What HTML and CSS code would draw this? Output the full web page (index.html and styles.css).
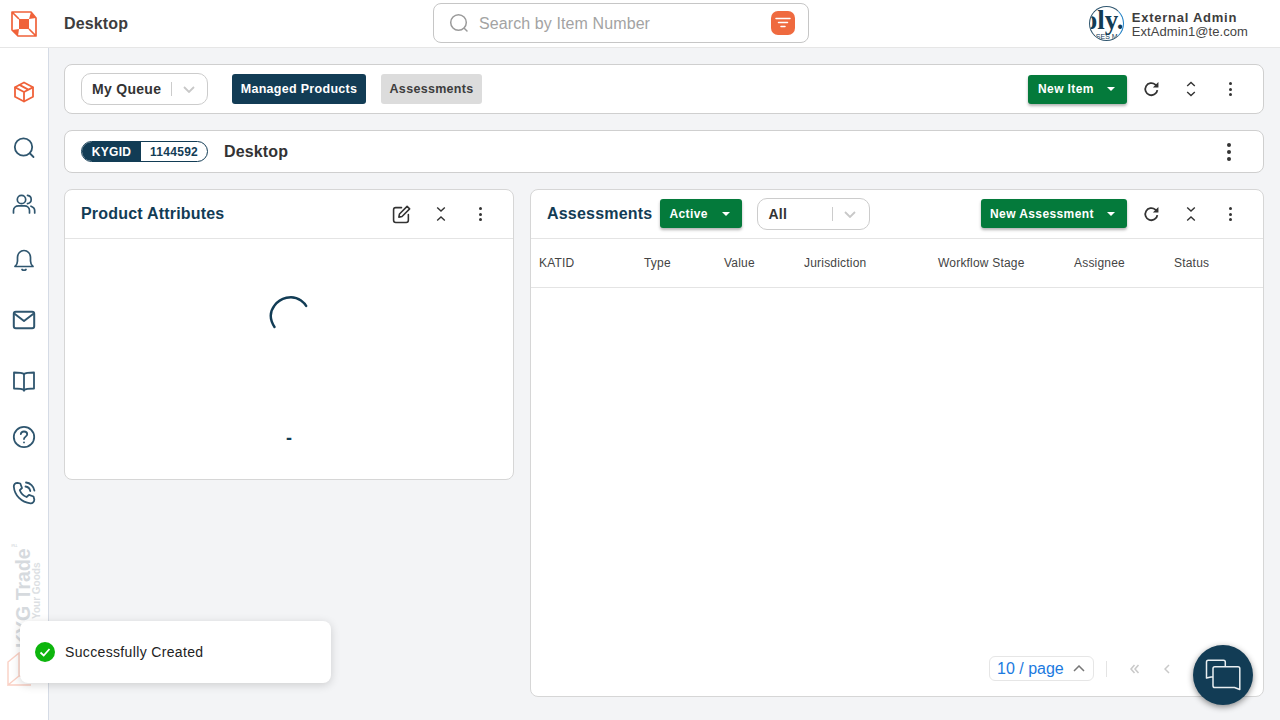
FILE: index.html
```html
<!DOCTYPE html>
<html lang="en">
<head>
    <meta charset="UTF-8">
    <meta name="viewport" content="width=device-width, initial-scale=1.0">
    <title>Desktop</title>
    <link rel="stylesheet" href="styles.css">
</head>
<body>
    <!-- Top bar -->
    <header class="topbar">
        <div class="logo-cell">
            <svg width="26" height="26" viewBox="0 0 26 26" fill="none">
                <path d="M8 8H18V18H8Z M20 1L25 7L18 8Z M1 19L7 25L8 18Z" fill="#f0623a"/>
                <path d="M1 1H20L25 7V25H7L1 19Z M1 1L8 8 M18 18L25 25" stroke="#f0623a" stroke-width="1.700" stroke-linejoin="round"/>
            </svg>
        </div>
        <div class="page-title">Desktop</div>
        <div class="search">
            <svg class="search-icon" width="20" height="20" viewBox="0 0 20 20" fill="none" stroke="#9a9a9a" stroke-width="1.500" stroke-linecap="round">
                <circle cx="9.500" cy="9.500" r="7.800"/><path d="M15.200 15.200L18 18"/>
            </svg>
            <span class="search-text">Search by Item Number</span>
            <span class="filter-btn">
                <svg width="16" height="12" viewBox="0 0 16 12" fill="none" stroke="#fff" stroke-width="1.500" stroke-linecap="round">
                    <path d="M1 1.500H15M3.500 5.500H12.500M6 9.500H10"/>
                </svg>
            </span>
        </div>
        <div class="profile">
            <div class="avatar">
                <span class="avatar-big">oly.</span>
                <span class="avatar-small">SES M</span>
            </div>
            <div class="profile-text">
                <div class="profile-name">External Admin</div>
                <div class="profile-mail">ExtAdmin1@te.com</div>
            </div>
        </div>
    </header>

    <div class="shell">
        <!-- Left icon rail -->
        <nav class="rail">
            <a class="rail-item">
                <svg width="24" height="24" viewBox="0 0 24 24" fill="none" stroke="#f0623a" stroke-width="1.800" stroke-linejoin="round" stroke-linecap="round">
                    <path d="M12 2.500L21 7.200V16.800L12 21.500L3 16.800V7.200Z"/><path d="M3.200 7.400L12 12L20.800 7.400M12 12V21.300M7.500 4.900L16.300 9.600"/>
                </svg>
            </a>
            <a class="rail-item">
                <svg width="24" height="24" viewBox="0 0 24 24" fill="none" stroke="#2f566f" stroke-width="1.800" stroke-linecap="round">
                    <circle cx="11.500" cy="11" r="8.700"/><path d="M18 17.500L21.500 21"/>
                </svg>
            </a>
            <a class="rail-item">
                <svg width="24" height="24" viewBox="0 0 24 24" fill="none" stroke="#2f566f" stroke-width="1.700" stroke-linecap="round">
                    <circle cx="9.500" cy="7.500" r="4.200"/><path d="M1.500 21V18.500C1.500 15.500 4 13.800 6.500 13.800H12.500C15 13.800 17.500 15.500 17.500 18.500V21"/><path d="M15.500 3.400C18 3.800 19.200 5.500 19.200 7.500C19.200 9.500 18 11.200 15.500 11.600M19 14.200C21.200 15 22.700 16.500 22.700 18.700V21"/>
                </svg>
            </a>
            <a class="rail-item">
                <svg width="24" height="24" viewBox="0 0 24 24" fill="none" stroke="#2f566f" stroke-width="1.700" stroke-linecap="round" stroke-linejoin="round">
                    <path d="M3 18.500H21C19.300 17 18.500 15.600 18.500 13V9.500C18.500 5.600 15.600 2.500 12 2.500C8.400 2.500 5.500 5.600 5.500 9.500V13C5.500 15.600 4.700 17 3 18.500Z"/><path d="M10 21.500C11 22.400 13 22.400 14 21.500"/>
                </svg>
            </a>
            <a class="rail-item rail-mail">
                <svg width="24" height="24" viewBox="0 0 24 24" fill="none" stroke="#2f566f" stroke-width="2" stroke-linejoin="round">
                    <rect x="1.800" y="3.800" width="20.400" height="16.400" rx="2"/><path d="M2.200 5.500L12 13L21.800 5.500"/>
                </svg>
            </a>
            <a class="rail-item rail-book">
                <svg width="24" height="24" viewBox="0 0 24 24" fill="none" stroke="#2f566f" stroke-width="1.800" stroke-linejoin="round">
                    <path d="M12 5C10.500 3.800 8 3.500 2 3.500V19.500C8 19.500 10.500 19.800 12 21C13.500 19.800 16 19.500 22 19.500V3.500C16 3.500 13.500 3.800 12 5Z"/><path d="M12 5V22.500"/>
                </svg>
            </a>
            <a class="rail-item">
                <svg width="24" height="24" viewBox="0 0 24 24" fill="none" stroke="#2f566f" stroke-width="1.800" stroke-linecap="round">
                    <circle cx="12" cy="12" r="10.200"/><path d="M8.800 9.200C9 7.400 10.400 6.500 12 6.500C13.800 6.500 15.200 7.700 15.200 9.300C15.200 11.500 12 11.700 12 14"/><path d="M12 17.300V17.400"/>
                </svg>
            </a>
            <a class="rail-item">
                <svg width="24" height="24" viewBox="0 0 24 24" fill="none" stroke="#2f566f" stroke-width="1.800" stroke-linecap="round" stroke-linejoin="round">
                    <path d="M5.500 1.800L8.300 2.500L10 7L7.800 9.200C8.800 12 11.500 14.800 14.600 16L17 13.800L21.500 15.500L22.300 18.500C22.300 20.800 20.500 22.500 18.500 22.300C9.500 21.500 2.500 14.500 1.800 5.500C1.700 3.500 3.300 1.800 5.500 1.800Z"/><path d="M13.500 5.500C15.800 5.800 17.800 7.600 18.300 10M14 1.500C18.200 1.900 21.800 5.200 22.400 9.600"/>
                </svg>
            </a>
            <div class="watermark">
                <span class="wm-name">KYG Trade<sup>™</sup></span>
                <span class="wm-tag">Your Goods</span>
            </div>
            <svg class="wm-logo" width="24" height="34" viewBox="0 0 24 34" fill="none" stroke="#f0623a" stroke-opacity=".3" stroke-width="1.400">
                <path d="M1 10L12 1V24L1 33Z M1 33H24 M12 24H24"/>
            </svg>
        </nav>

        <main class="main">
            <section class="card toolbar">
                <div class="select queue-select">
                    <span class="select-label">My Queue</span>
                    <span class="select-sep"></span>
                    <svg class="select-arrow" width="12" height="7" viewBox="0 0 12 7" fill="none" stroke="#c8c8c8" stroke-width="1.800"><path d="M1 1L6 6L11 1"/></svg>
                </div>
                <button class="tab tab-on">Managed Products</button>
                <button class="tab tab-off">Assessments</button>
                <div class="spacer"></div>
                <button class="btn-green new-item">New Item<span class="caret"></span></button>
                <span class="tool"><svg width="17" height="17" viewBox="0 0 16 16" fill="none" stroke="#333" stroke-width="1.700"><path d="M13.500 8.500A5.700 5.700 0 1 1 11.600 3.400L13.600 5.200"/><path d="M14.500 1V6.200H9.300Z" stroke="none" fill="#333"/></svg></span>
                <span class="tool"><svg width="10" height="16" viewBox="0 0 10 16" fill="none" stroke="#333" stroke-width="1.400"><path d="M1.200 5L5 1.500L8.800 5M1.200 11L5 14.500L8.800 11"/></svg></span>
                <span class="tool"><span class="dots"><i></i><i></i><i></i></span></span>
            </section>

            <section class="card idbar">
                <div class="id-badge">
                    <span class="id-key">KYGID</span>
                    <span class="id-val">1144592</span>
                </div>
                <span class="id-title">Desktop</span>
                <div class="spacer"></div>
                <span class="tool"><span class="dots dots-big"><i></i><i></i><i></i></span></span>
            </section>

            <div class="panels">
                <section class="card panel panel-left">
                    <div class="panel-head">
                        <h2 class="panel-title">Product Attributes</h2>
                        <div class="spacer"></div>
                        <span class="tool"><svg width="19" height="19" viewBox="0 0 18 18" fill="none" stroke="#333" stroke-width="1.500" stroke-linecap="round" stroke-linejoin="round"><path d="M9 2.500H3.500C2.400 2.500 1.500 3.400 1.500 4.500V14.500C1.500 15.600 2.400 16.500 3.500 16.500H13.500C14.600 16.500 15.500 15.600 15.500 14.500V9"/><path d="M14.300 1.300L16.700 3.700L9.500 10.900L6.500 11.500L7.100 8.500Z"/></svg></span>
                        <span class="tool"><svg width="10" height="16" viewBox="0 0 10 16" fill="none" stroke="#333" stroke-width="1.400"><path d="M1.200 1.500L5 5L8.800 1.500M1.200 14.500L5 11L8.800 14.500"/></svg></span>
                        <span class="tool"><span class="dots"><i></i><i></i><i></i></span></span>
                    </div>
                    <div class="panel-loading">
                        <svg width="44" height="44" viewBox="0 0 44 44" fill="none" stroke="#123c55" stroke-width="2.400" stroke-linecap="round">
                            <path d="M7.500 34C3 27 2.500 19 7.500 12.500C13 5 25 1 34 7.500C36 9 38 10.500 39.200 13"/>
                        </svg>
                        <span class="dash">-</span>
                    </div>
                </section>

                <section class="card panel panel-right">
                    <div class="panel-head">
                        <h2 class="panel-title">Assessments</h2>
                        <button class="btn-green active-btn">Active<span class="caret"></span></button>
                        <div class="select all-select">
                            <span class="select-label">All</span>
                            <span class="select-sep"></span>
                            <svg class="select-arrow" width="12" height="7" viewBox="0 0 12 7" fill="none" stroke="#c8c8c8" stroke-width="1.800"><path d="M1 1L6 6L11 1"/></svg>
                        </div>
                        <div class="spacer"></div>
                        <button class="btn-green new-assess">New Assessment<span class="caret"></span></button>
                        <span class="tool"><svg width="17" height="17" viewBox="0 0 16 16" fill="none" stroke="#333" stroke-width="1.700"><path d="M13.500 8.500A5.700 5.700 0 1 1 11.600 3.400L13.600 5.200"/><path d="M14.500 1V6.200H9.300Z" stroke="none" fill="#333"/></svg></span>
                        <span class="tool"><svg width="10" height="16" viewBox="0 0 10 16" fill="none" stroke="#333" stroke-width="1.400"><path d="M1.200 1.500L5 5L8.800 1.500M1.200 14.500L5 11L8.800 14.500"/></svg></span>
                        <span class="tool"><span class="dots"><i></i><i></i><i></i></span></span>
                    </div>
                    <div class="table-head">
                        <span>KATID</span>
                        <span>Type</span>
                        <span>Value</span>
                        <span>Jurisdiction</span>
                        <span>Workflow Stage</span>
                        <span>Assignee</span>
                        <span>Status</span>
                    </div>
                    <div class="pager">
                        <div class="page-size">10 / page
                            <svg width="12" height="7" viewBox="0 0 12 7" fill="none" stroke="#777" stroke-width="1.500"><path d="M1 6L6 1L11 6"/></svg>
                        </div>
                        <span class="pager-sep"></span>
                        <svg class="pager-first" width="10" height="10" viewBox="0 0 10 10" fill="none" stroke="#c9c9c9" stroke-width="1.500"><path d="M4.500 1L1 5L4.500 9M8.500 1L5 5L8.500 9"/></svg>
                        <svg class="pager-prev" width="6" height="10" viewBox="0 0 6 10" fill="none" stroke="#c9c9c9" stroke-width="1.500"><path d="M5 1L1 5L5 9"/></svg>
                    </div>
                </section>
            </div>
        </main>
    </div>

    <!-- Toast -->
    <div class="toast">
        <svg width="20" height="20" viewBox="0 0 20 20"><circle cx="10" cy="10" r="10" fill="#0db50d"/><path d="M5.500 10.500L8.700 13.500L14.500 7" fill="none" stroke="#fff" stroke-width="1.800"/></svg>
        <span>Successfully Created</span>
    </div>

    <!-- Chat button -->
    <div class="chat-fab">
        <svg width="36" height="32" viewBox="0 0 36 32" fill="none" stroke="#e9eef1" stroke-width="1.500" stroke-linejoin="round">
            <path d="M8 18H6L1.500 19V3C1.500 2 2.300 1.200 3.200 1.200H18.500C19.500 1.200 20.300 2 20.300 3V7.500"/>
            <path d="M8 9.500C8 8.500 8.800 7.700 9.800 7.700H33C34 7.700 34.800 8.500 34.800 9.500V30.500L29.500 28.500H9.800C8.800 28.500 8 27.700 8 26.700Z"/>
        </svg>
    </div>
</body>
</html>
```

FILE: styles.css
```css
* {
    box-sizing: border-box;
}

html, body {
    margin: 0;
    height: 720px;
    overflow: hidden;
}

body {
    background-color: #f3f4f6;
    font-family: 'Liberation Sans', Arial, sans-serif;
    color: #333;
}

h2 {
    margin: 0;
}

button {
    font-family: inherit;
    border: none;
}

.spacer {
    flex: 1;
}

/* Top bar */
.topbar {
    height: 48px;
    background-color: #fff;
    border-bottom: 1px solid #e6e6e6;
    display: grid;
    grid-template-columns: 48px 385px 376px 1fr;
    align-items: center;
}

.logo-cell {
    display: flex;
    justify-content: center;
}

.page-title {
    padding: 1px 0 0 16px;
    font-size: 16px;
    font-weight: bold;
    color: #3d3d3d;
    letter-spacing: 0.15px;
}

.search {
    height: 40px;
    margin-top: -1px;
    border: 1px solid #c6c6c6;
    border-radius: 8px;
    display: flex;
    align-items: center;
    padding: 0 13px 0 15px;
}

.search-text {
    margin-left: 10px;
    padding-top: 1px;
    font-size: 16px;
    color: #a3a3a3;
    letter-spacing: 0.1px;
}

.filter-btn {
    margin-left: auto;
    width: 24px;
    height: 24px;
    background-color: #ef6a3f;
    border-radius: 7px;
    display: flex;
    align-items: center;
    justify-content: center;
}

.profile {
    display: flex;
    justify-content: flex-end;
    align-items: center;
    padding-right: 32px;
    gap: 8px;
}

.avatar {
    width: 35px;
    height: 35px;
    margin-top: -1px;
    border-radius: 50%;
    border: 1px solid #2f566f;
    border-right-color: #1f7fc4;
    overflow: hidden;
    position: relative;
    background-color: #fff;
}

.avatar-big {
    position: absolute;
    top: -2px;
    left: -6px;
    font-family: 'Liberation Serif', serif;
    font-size: 27px;
    font-weight: bold;
    color: #123c55;
    white-space: nowrap;
}

.avatar-small {
    position: absolute;
    bottom: 0;
    left: 6px;
    font-size: 7px;
    color: #123c55;
    white-space: nowrap;
}

.profile-text {
    padding-top: 1px;
}

.profile-name {
    font-size: 13px;
    font-weight: bold;
    color: #3d3d3d;
    letter-spacing: 0.75px;
    line-height: 15px;
}

.profile-mail {
    font-size: 13px;
    color: #444;
    letter-spacing: 0.07px;
    line-height: 14px;
}

/* Shell */
.shell {
    display: flex;
    height: 672px;
}

.rail {
    width: 49px;
    flex-shrink: 0;
    background-color: #fff;
    border-right: 1px solid #d5dbe5;
    padding-top: 16px;
    display: flex;
    flex-direction: column;
    position: relative;
}

.rail-item {
    height: 56px;
    display: flex;
    align-items: center;
    justify-content: center;
}

.rail-mail {
    margin-top: 4px;
}

.rail-book {
    margin-top: 5px;
}

.watermark {
    position: absolute;
    left: 4px;
    top: 493px;
    height: 150px;
    writing-mode: vertical-rl;
    transform: rotate(180deg);
    display: flex;
    flex-direction: column;
    align-items: flex-end;
    font-weight: bold;
    color: #d6dade;
    white-space: nowrap;
}

.wm-name {
    font-size: 19.500px;
    line-height: 22px;
}

.wm-name sup {
    font-size: 7px;
    font-weight: normal;
}

.wm-tag {
    font-size: 10px;
    line-height: 12px;
    margin: 0 -3px 22px 0;
    color: #dcdfe3;
}

.wm-logo {
    position: absolute;
    left: 7px;
    top: 604px;
}

.main {
    flex: 1;
    min-width: 0;
    padding: 16px 16px 16px 15px;
    display: flex;
    flex-direction: column;
    gap: 16px;
}

.card {
    background-color: #fff;
    border: 1px solid #cfcfcf;
    border-radius: 8px;
}

/* Toolbar rows */
.toolbar {
    height: 50px;
    display: flex;
    align-items: center;
    padding-left: 16px;
}

.select {
    border: 1px solid #cccccc;
    border-radius: 10px;
    display: flex;
    align-items: center;
    background-color: #fff;
}

.select-label {
    font-size: 14px;
    font-weight: bold;
    color: #333;
    letter-spacing: 0.3px;
}

.select-sep {
    width: 1px;
    height: 14px;
    background-color: #cccccc;
}

.select-arrow {
    margin-left: 11px;
}

.queue-select {
    width: 127px;
    height: 32px;
    padding-left: 10px;
}

.queue-select .select-sep {
    margin-left: 10px;
}

.tab {
    height: 30px;
    border-radius: 3px;
    font-size: 12.500px;
    font-weight: bold;
    letter-spacing: 0.3px;
    padding: 0;
}

.tab-on {
    width: 134px;
    margin-left: 24px;
    background-color: #123c55;
    color: #fff;
}

.tab-off {
    width: 101px;
    margin-left: 15px;
    background-color: #dcdcdc;
    color: #3d3d3d;
}

.btn-green {
    height: 29px;
    background-color: #047a3b;
    color: #fff;
    border-radius: 3px;
    font-size: 12px;
    font-weight: bold;
    letter-spacing: 0.4px;
    display: flex;
    align-items: center;
    justify-content: space-between;
    padding: 0 12px 0 10px;
    box-shadow: 0 2px 3px rgba(0, 0, 0, 0.3);
}

.caret {
    width: 0;
    height: 0;
    border-left: 4px solid transparent;
    border-right: 4px solid transparent;
    border-top: 4px solid #fff;
}

.new-item {
    width: 99px;
    margin-right: 4px;
}

.new-assess {
    width: 146px;
    margin-right: 4px;
    margin-top: -1px;
    padding-left: 9px;
}

.active-btn {
    width: 82px;
    margin-left: 8px;
    margin-top: -1px;
    padding-left: 9px;
}

.tool {
    width: 40px;
    height: 24px;
    display: flex;
    align-items: center;
    justify-content: center;
}

.toolbar .tool:last-child,
.panel-head .tool:last-child {
    width: 39px;
    margin-right: 13px;
}

.dots {
    display: flex;
    flex-direction: column;
    gap: 2.500px;
}

.dots i {
    width: 3px;
    height: 3px;
    background-color: #333;
    border-radius: 50%;
}

.dots-big {
    gap: 3px;
}

.dots-big i {
    width: 4px;
    height: 4px;
}

.idbar {
    height: 43px;
    display: flex;
    align-items: center;
    padding-left: 16px;
}

.idbar .tool {
    margin-right: 14px;
}

.id-badge {
    width: 127px;
    height: 21px;
    border: 1px solid #123c55;
    border-radius: 11px;
    display: flex;
    overflow: hidden;
    font-size: 12px;
    font-weight: bold;
    letter-spacing: 0.3px;
}

.id-key {
    width: 59px;
    background-color: #123c55;
    color: #fff;
    display: flex;
    align-items: center;
    justify-content: center;
}

.id-val {
    flex: 1;
    color: #123c55;
    display: flex;
    align-items: center;
    justify-content: center;
}

.id-title {
    margin-left: 16px;
    font-size: 16px;
    font-weight: bold;
    color: #333;
    letter-spacing: 0.15px;
}

/* Panels */
.panels {
    flex: 1;
    display: grid;
    grid-template-columns: 450px 734px;
    gap: 16px;
    align-items: start;
}

.panel {
    display: flex;
    flex-direction: column;
    border-color: #d6d6d6;
}

.panel-left {
    height: 291px;
}

.panel-right {
    height: 508px;
}

.panel-head {
    height: 49px;
    flex-shrink: 0;
    border-bottom: 1px solid #e4e4e4;
    display: flex;
    align-items: center;
    padding-left: 16px;
}

.panel-title {
    font-size: 16px;
    font-weight: bold;
    color: #123c55;
    letter-spacing: 0.2px;
}

.panel-loading {
    display: flex;
    flex-direction: column;
    align-items: center;
    padding-top: 54px;
}

.dash {
    margin-top: 92px;
    font-size: 18px;
    font-weight: bold;
    color: #123c55;
    line-height: 18px;
}

.all-select {
    width: 113px;
    height: 32px;
    margin-left: 15px;
    padding-left: 10px;
}

.all-select .select-sep {
    margin-left: 45px;
}

.table-head {
    height: 49px;
    flex-shrink: 0;
    border-bottom: 1px solid #e4e4e4;
    display: grid;
    grid-template-columns: 105px 80px 80px 134px 136px 100px 1fr;
    align-items: center;
    padding-left: 8px;
    font-size: 12px;
    letter-spacing: 0.2px;
    color: #444;
}

.pager {
    margin-top: auto;
    display: flex;
    align-items: center;
    justify-content: flex-end;
    padding: 0 93px 15px 0;
}

.page-size {
    width: 105px;
    height: 25px;
    border: 1px solid #e6e6e6;
    border-radius: 6px;
    display: flex;
    align-items: center;
    justify-content: space-between;
    padding: 0 8px 0 7px;
    font-size: 16px;
    color: #1b7ae0;
}

.pager-sep {
    width: 1px;
    height: 16px;
    margin-left: 12px;
    background-color: #e4e4e4;
}

.pager-first {
    margin-left: 23px;
}

.pager-prev {
    margin-left: 24px;
}

/* Floating */
.toast {
    position: absolute;
    left: 20px;
    top: 621px;
    width: 311px;
    height: 62px;
    background-color: #fff;
    border-radius: 8px;
    box-shadow: 0 2px 10px rgba(0, 0, 0, 0.16);
    display: flex;
    align-items: center;
    gap: 10px;
    padding-left: 15px;
    font-size: 14px;
    color: #222;
    letter-spacing: 0.35px;
}

.chat-fab {
    position: absolute;
    left: 1193px;
    top: 645px;
    width: 60px;
    height: 60px;
    background-color: #123c55;
    border-radius: 50%;
    box-shadow: 0 2px 6px rgba(0, 0, 0, 0.45);
    display: flex;
    align-items: center;
    justify-content: center;
}
```
